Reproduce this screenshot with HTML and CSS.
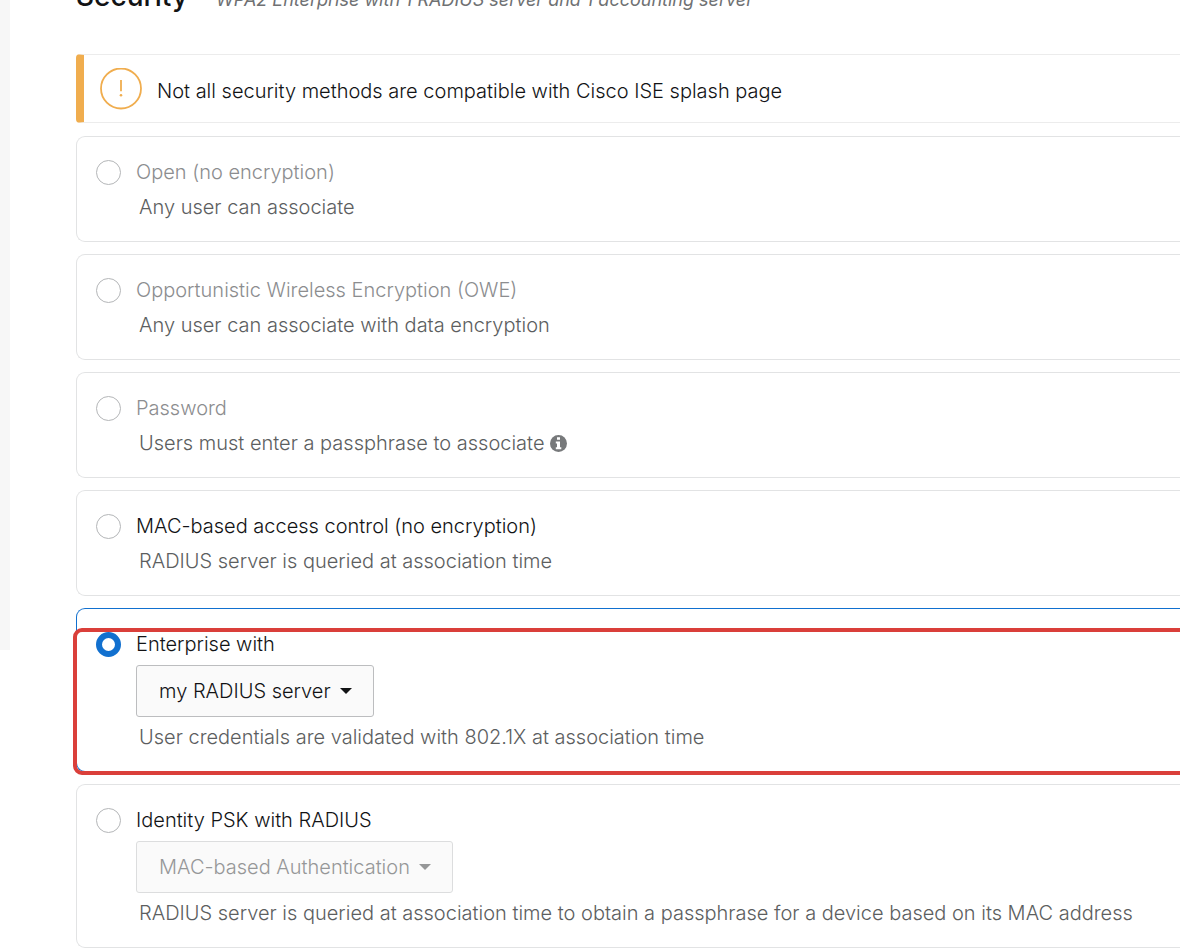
FILE: index.html
```html
<!DOCTYPE html>
<html lang="en">
<head>
<meta charset="utf-8">
<meta name="viewport" content="width=device-width, initial-scale=1">
<title>Security</title>
<link rel="stylesheet" href="styles.css">
</head>
<body>
<div class="page">
  <aside class="rail"></aside>
  <main class="content">
    <header class="heading">
      <h1 class="title">Security</h1>
      <p class="summary">WPA2 Enterprise with 1 RADIUS server and 1 accounting server</p>
    </header>

    <div class="alert" role="alert">
      <svg class="alert-icon" viewBox="0 0 42 42" aria-hidden="true">
        <circle cx="21" cy="20.5" r="20" fill="none" stroke="#f0ad4e" stroke-width="1.8"/>
        <path d="M21 12v11.2" fill="none" stroke="#f0ad4e" stroke-width="1.8"/>
        <circle cx="21" cy="27.3" r="1.3" fill="#f0ad4e"/>
      </svg>
      <span class="alert-text">Not all security methods are compatible with Cisco ISE splash page</span>
    </div>

    <form class="options">
      <div class="card">
        <input class="radio" type="radio" name="security" id="open" disabled>
        <div class="body">
          <label class="label off" for="open">Open (no encryption)</label>
          <p class="note">Any user can associate</p>
        </div>
      </div>

      <div class="card">
        <input class="radio" type="radio" name="security" id="owe" disabled>
        <div class="body">
          <label class="label off" for="owe">Opportunistic Wireless Encryption (OWE)</label>
          <p class="note">Any user can associate with data encryption</p>
        </div>
      </div>

      <div class="card">
        <input class="radio" type="radio" name="security" id="password" disabled>
        <div class="body">
          <label class="label off" for="password">Password</label>
          <p class="note">Users must enter a passphrase to associate
            <svg class="info" viewBox="0 0 17 17" aria-hidden="true">
              <circle cx="8.5" cy="8.5" r="8.5" fill="#77797b"/>
              <path d="M7 2.2h3v2.6H7zM5.8 6.6H10v5.6h1.3v2H5.8v-2H7V8.5H5.8z" fill="#fff"/>
            </svg>
          </p>
        </div>
      </div>

      <div class="card">
        <input class="radio" type="radio" name="security" id="mac">
        <div class="body">
          <label class="label" for="mac">MAC-based access control (no encryption)</label>
          <p class="note">RADIUS server is queried at association time</p>
        </div>
      </div>

      <div class="card selected">
        <input class="radio" type="radio" name="security" id="enterprise" checked>
        <div class="body">
          <label class="label" for="enterprise">Enterprise with</label>
          <div class="picker">
            <select class="select" aria-label="Enterprise server">
              <option>my RADIUS server</option>
            </select>
            <svg class="caret" viewBox="0 0 12 6" aria-hidden="true"><path d="M0 0h12L6 6z" fill="currentColor"/></svg>
          </div>
          <p class="note">User credentials are validated with 802.1X at association time</p>
        </div>
        <div class="highlight"></div>
      </div>

      <div class="card">
        <input class="radio" type="radio" name="security" id="ipsk">
        <div class="body">
          <label class="label" for="ipsk">Identity PSK with RADIUS</label>
          <div class="picker off">
            <select class="select" aria-label="Identity PSK method" disabled>
              <option>MAC-based Authentication</option>
            </select>
            <svg class="caret" viewBox="0 0 12 6" aria-hidden="true"><path d="M0 0h12L6 6z" fill="currentColor"/></svg>
          </div>
          <p class="note">RADIUS server is queried at association time to obtain a passphrase for a device based on its MAC address</p>
        </div>
      </div>
    </form>
  </main>
</div>
</body>
</html>
```
FILE: styles.css
```css
* { box-sizing: border-box; }

body {
  margin: 0;
  overflow-x: hidden;
  background: #fff;
  color: #121315;
  font: 300 20px/30px Inter, "Liberation Sans", sans-serif;
}

.page { display: flex; overflow: hidden; }

.rail {
  flex: 0 0 10px;
  min-height: 650px;
  align-self: flex-start;
  background: #f7f7f7;
}

.content { flex: 1; min-width: 0; padding-left: 66px; }

.heading {
  display: flex;
  align-items: baseline;
  gap: 28px;
  margin-top: -24px;
  margin-bottom: 38px;
}

.title { margin: 0; font-size: 28px; line-height: 40px; font-weight: 500; }
.summary { margin: 0; font-style: italic; font-weight: 400; font-size: 18px; color: #6f7173; }

.alert {
  display: flex;
  align-items: center;
  gap: 15px;
  min-height: 69px;
  padding-left: 16px;
  border: 1px solid #ececec;
  border-left: 8px solid #f0ad4e;
  border-right: 0;
  border-radius: 4px 0 0 4px;
}

.alert-icon { flex: none; width: 42px; height: 42px; }
.alert-text { padding-top: 4px; }

.options { display: flex; flex-direction: column; gap: 12px; margin-top: 13px; }

.card {
  position: relative;
  display: flex;
  gap: 15px;
  padding: 20px 0 14px 19px;
  border: 1px solid #e2e3e4;
  border-right: 0;
  border-radius: 9px 0 0 9px;
}

.selected { border-color: #1170cf; }

.radio {
  appearance: none;
  flex: none;
  width: 25px;
  height: 25px;
  margin: 3px 0 0;
  border: 1px solid #b4b6b8;
  border-radius: 50%;
  background: #fff;
}

.radio:checked { border: 6px solid #1170cf; }

.body { flex: 1; min-width: 0; }
.label { display: block; }
.label.off { color: #8c8d8f; }
.note { margin: 0; padding-left: 3px; line-height: 40px; color: #5c5e60; white-space: nowrap; }
.info { width: 17px; height: 17px; vertical-align: -2px; }

.picker { position: relative; width: fit-content; margin-top: 6px; color: #121315; }
.picker.off { color: #969798; }

.select {
  appearance: none;
  display: block;
  height: 52px;
  padding: 0 42px 0 22px;
  border: 1px solid #bcbdbf;
  border-radius: 3px;
  background: #fafafa;
  color: inherit;
  font: inherit;
  opacity: 1;
}

.off .select { border-color: #dcddde; }

.caret {
  position: absolute;
  top: 23px;
  right: 22px;
  width: 12px;
  height: 6px;
  pointer-events: none;
}

.highlight {
  position: absolute;
  top: 19px;
  right: -8px;
  bottom: -4px;
  left: -4px;
  border: 4px solid #da3f3a;
  border-radius: 9px;
  pointer-events: none;
}
```
